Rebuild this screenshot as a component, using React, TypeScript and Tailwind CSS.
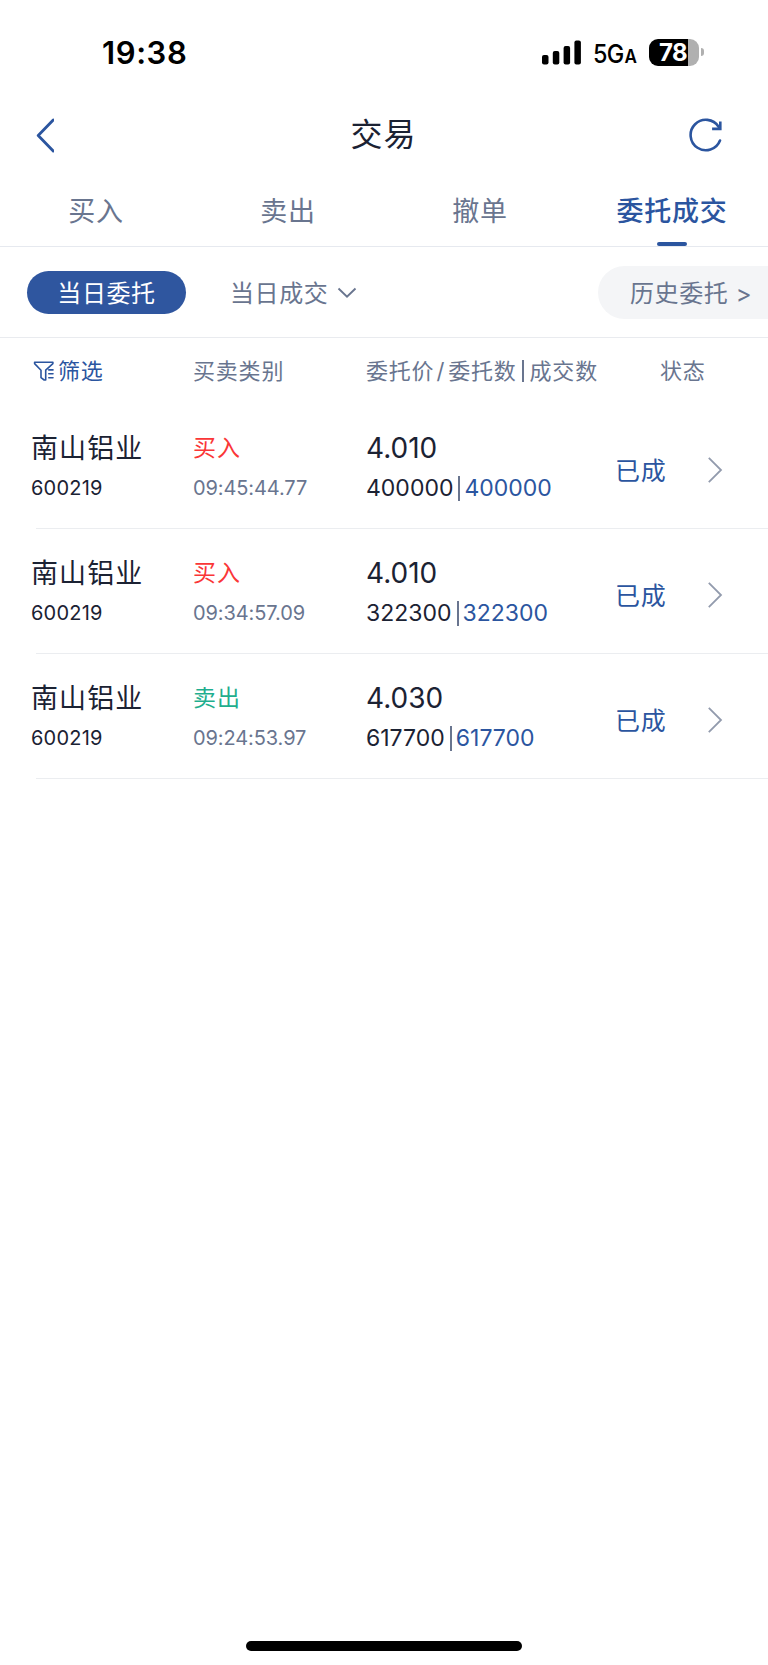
import { useState } from 'react';
import { clsx } from 'clsx';

interface Order {
  id: number;
  name: string;
  code: string;
  side: 'buy' | 'sell';
  time: string;
  price: string;
  amount: string;
  filled: string;
  status: string;
}

const TABS = ['买入', '卖出', '撤单', '委托成交'];

const ORDERS: Order[] = [
  { id: 1, name: '南山铝业', code: '600219', side: 'buy', time: '09:45:44.77', price: '4.010', amount: '400000', filled: '400000', status: '已成' },
  { id: 2, name: '南山铝业', code: '600219', side: 'buy', time: '09:34:57.09', price: '4.010', amount: '322300', filled: '322300', status: '已成' },
  { id: 3, name: '南山铝业', code: '600219', side: 'sell', time: '09:24:53.97', price: '4.030', amount: '617700', filled: '617700', status: '已成' },
];

const StatusBar = () => (
  <div className="flex h-[104px] items-center justify-between pl-[102px] pr-16 text-black">
    <span className="pt-px text-[31px] font-semibold leading-none tracking-[0.6px]">19:38</span>
    <div className="flex items-center">
      <svg width="39" height="25" viewBox="0 0 39 25" fill="currentColor">
        <rect x="0" y="15" width="6.5" height="9.5" rx="2" />
        <rect x="10.8" y="11" width="6.5" height="13.5" rx="2" />
        <rect x="21.6" y="6" width="6.5" height="18.5" rx="2" />
        <rect x="32.4" y="0.5" width="6.5" height="24" rx="2" />
      </svg>
      <div className="ml-3 flex w-[44px] origin-left scale-x-90 items-baseline pt-[3px] leading-none">
        <span className="text-[26px] font-medium tracking-[-0.8px]">5G</span>
        <span className="ml-px text-[19px] font-semibold">A</span>
      </div>
      <div className="ml-3 flex items-center">
        <div className="flex h-[27px] w-[50px] items-center overflow-hidden rounded-[9px] bg-linear-to-r from-black from-78% to-[#b0b0b0] to-78%">
          <span className="ml-[10px] pt-px text-[24px] font-bold leading-none tracking-[-0.6px] text-white">78</span>
        </div>
        <div className="ml-[2px] h-[8px] w-[3px] rounded-r-full bg-[#b0b0b0]" />
      </div>
    </div>
  </div>
);

const Header = () => (
  <header className="flex h-[62px] items-center justify-between pl-[34px] pr-[44px]">
    <button className="w-[45px] text-[#2b559f]">
      <svg width="20" height="36" viewBox="0 0 20 36" fill="none" stroke="currentColor" strokeWidth="2.8" strokeLinecap="round" strokeLinejoin="round">
        <path d="M19.2 3 4.2 18.500l15 15.500" />
      </svg>
    </button>
    <h1 className="text-[32px] font-normal leading-none tracking-[1px] text-[#1b2233]">交易</h1>
    <button className="text-[#2b559f]">
      <svg width="36" height="36" viewBox="0 0 36 36" fill="none" stroke="currentColor" strokeWidth="2.6">
        <path d="M32 23.5A15.2 15.2 0 1 1 30.6 9.8" strokeLinecap="round" />
        <path d="M32.3 4.500v7.400h-8.200" />
      </svg>
    </button>
  </header>
);

const FilterIcon = () => (
  <svg width="21" height="21" viewBox="0 0 21 21" fill="none" stroke="currentColor" strokeWidth="1.6" strokeLinecap="round" strokeLinejoin="round">
    <path d="M1.6 1.3h18.3v1.3l-7.200 6.600v9.800h-1.500L8 16.700V9.200L1.600 2.600z" />
    <path d="M15.800 8.900h4.200M15.800 12.800h4.200M15.800 16.700h4.200" />
  </svg>
);

const OrderRow = ({ order }: { order: Order }) => (
  <li>
    <div className="flex h-[124px] pl-[31px]">
      <div className="flex w-[162px] flex-col pt-[27px]">
        <span className="h-9 text-[27px] leading-9 tracking-[1.1px] text-[#1b2233]">{order.name}</span>
        <span className="mt-[7px] h-7 text-[20px] leading-7 tracking-[0.2px] text-[#1b2233]">{order.code}</span>
      </div>
      <div className="flex w-[173px] flex-col pt-[26px]">
        <span
          className={clsx(
            'h-9 text-[23px] leading-9 tracking-[1px]',
            order.side === 'buy' ? 'text-[#fa3637]' : 'text-[#1fae8e]'
          )}
        >
          {order.side === 'buy' ? '买入' : '卖出'}
        </span>
        <span className="mt-2 h-7 text-[20px] leading-7 tracking-[-0.1px] text-[#69758f]">{order.time}</span>
      </div>
      <div className="flex w-[249px] flex-col pt-[26px]">
        <span className="h-9 text-[28px] leading-9 text-[#1b2233]">{order.price}</span>
        <div className="mt-2 flex h-7 items-center text-[23px] leading-7">
          <span className="text-[#1b2233]">{order.amount}</span>
          <span className="ml-[5px] mr-1 h-[25px] w-[2px] bg-[#69758f]" />
          <span className="text-[#2b559f]">{order.filled}</span>
        </div>
      </div>
      <span className="w-[93px] pt-[49px] text-[25px] leading-9 tracking-[0.8px] text-[#2b559f]">{order.status}</span>
      <svg className="mt-[52px]" width="16" height="28" viewBox="0 0 16 28" fill="none" stroke="#929bad" strokeWidth="1.8">
        <path d="M.8 1.8 13 14 .8 26.200" />
      </svg>
    </div>
    <div className="ml-9 h-px bg-[#ebedf0]" />
  </li>
);

const App = () => {
  const [activeTab, setActiveTab] = useState('委托成交');

  return (
    <div className="flex h-[1665px] w-[768px] flex-col overflow-hidden bg-white font-['Inter','Noto_Sans_CJK_SC',sans-serif]">
      <StatusBar />
      <Header />

      <nav className="mt-[10px] grid h-[71px] grid-cols-4 border-b border-[#e6e9ef]">
        {TABS.map((tab) => (
          <button
            key={tab}
            onClick={() => setActiveTab(tab)}
            className={clsx(
              'flex flex-col items-center justify-between text-[27px] tracking-[0.8px]',
              tab === activeTab ? 'font-medium text-[#2b559f]' : 'text-[#69758f]'
            )}
          >
            <span className="mt-4 leading-10">{tab}</span>
            {tab === activeTab && <span className="h-1 w-[30px] rounded-full bg-[#2b559f]" />}
          </button>
        ))}
      </nav>

      <div className="flex h-[91px] items-center border-b border-[#e9ebef] pl-[27px] text-[24px] tracking-[0.6px] text-[#69758f]">
        <button className="h-[43px] w-[159px] rounded-full bg-[#2f569f] pt-[3px] leading-10 text-white">当日委托</button>
        <button className="ml-11 flex items-center">
          <span className="pt-[3px]">当日成交</span>
          <svg className="ml-[9px] mt-px" width="20" height="12" viewBox="0 0 20 12" fill="none" stroke="currentColor" strokeWidth="1.9">
            <path d="M1.5 1.5 10 9.600l8.500-8.100" />
          </svg>
        </button>
        <button className="ml-auto h-[53px] w-[170px] rounded-l-full bg-[#f4f5f7] pl-8 pt-[3px] text-left">历史委托 &gt;</button>
      </div>

      <div className="flex h-[66px] items-center pl-[33px] text-[22px] tracking-[0.8px] text-[#69758f]">
        <button className="flex w-[160px] items-center text-[#2b559f]">
          <FilterIcon />
          <span className="ml-1">筛选</span>
        </button>
        <span className="w-[173px]">买卖类别</span>
        <div className="flex w-[294px] items-center">
          委托价
          <span className="ml-[2px] mr-[3px]">/</span>
          委托数
          <span className="ml-[5px] mr-[6px] h-[22px] w-[2px] bg-[#69758f]" />
          成交数
        </div>
        <span>状态</span>
      </div>

      <ul>
        {ORDERS.map((order) => (
          <OrderRow key={order.id} order={order} />
        ))}
      </ul>

      <div className="mx-auto mb-[14px] mt-auto h-[10px] w-[276px] rounded-full bg-black" />
    </div>
  );
};

export default App;
